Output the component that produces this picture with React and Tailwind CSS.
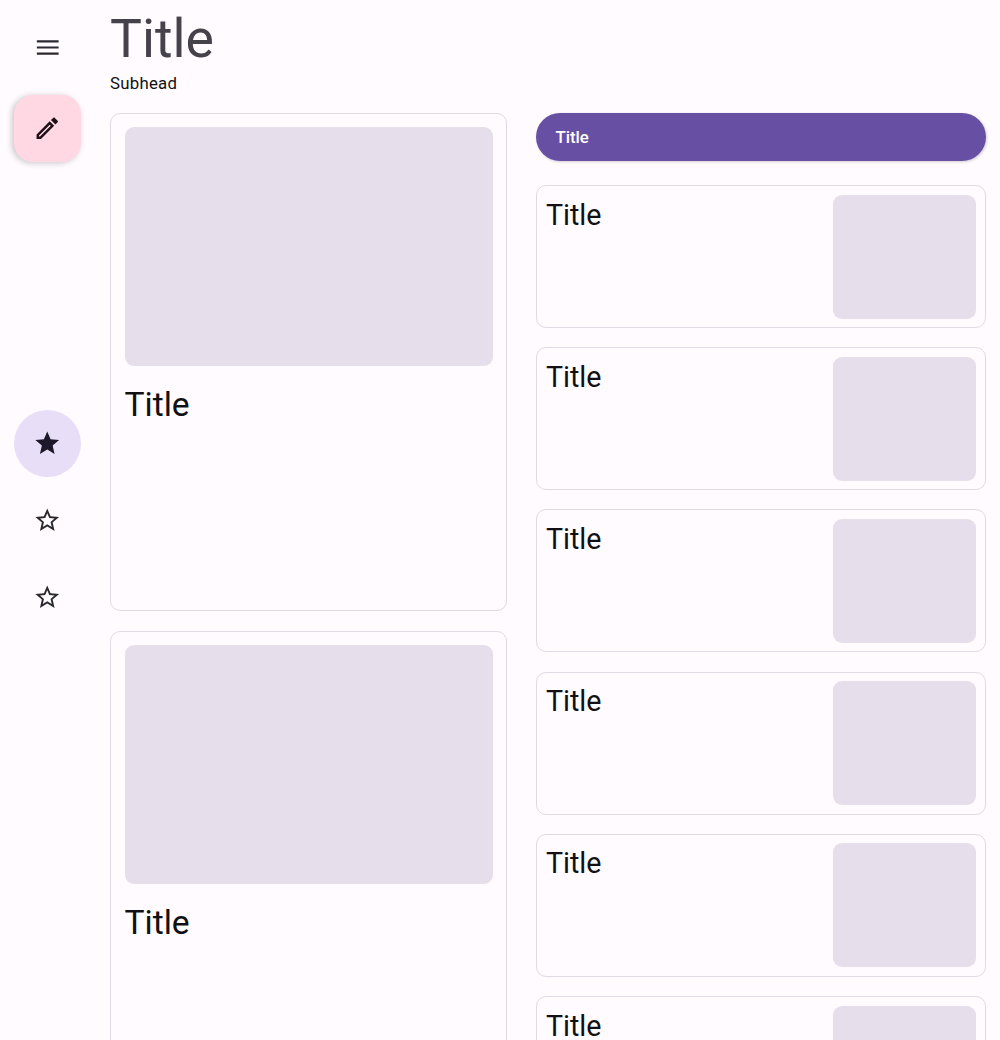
function Star({ filled }) {
  return (
    <svg viewBox="0 0 24 24" className="size-[28.5px]" fill="currentColor">
      {filled ? (
        <path d="M12 17.27 18.18 21l-1.64-7.03L22 9.24l-7.19-.61L12 2 9.19 8.63 2 9.24l5.46 4.73L5.82 21z" />
      ) : (
        <path d="m22 9.24-7.19-.62L12 2 9.19 8.63 2 9.24l5.46 4.73L5.82 21 12 17.27 18.18 21l-1.63-7.03L22 9.24zM12 15.4l-3.76 2.27 1-4.28-3.32-2.88 4.38-.38L12 6.1l1.71 4.04 4.38.38-3.32 2.88 1 4.28L12 15.4z" />
      )}
    </svg>
  );
}

function Rail() {
  return (
    <nav className="flex w-[95px] shrink-0 flex-col items-center text-[#2b2930]">
      <button className="mt-[33px] flex size-[29px] items-center justify-center">
        <svg viewBox="0 0 24 24" className="size-[29px]" fill="currentColor">
          <path d="M3.2 18h18v-1.8h-18V18zm0-5.1h18v-1.8h-18v1.8zM3.2 6v1.8h18V6h-18z" />
        </svg>
      </button>
      <button className="mt-[33px] flex size-[67px] items-center justify-center rounded-[19px] bg-[#ffd8e4] text-[#1f1017] shadow-[-2px_1px_6px_0px_rgba(0,0,0,0.22)]">
        <svg viewBox="0 0 24 24" className="mb-px size-[28.5px]" fill="currentColor">
          <path d="M14.06 9.02l.92.92L5.92 19H5v-.92l9.06-9.06M17.66 3c-.25 0-.51.1-.7.29l-1.83 1.83 3.75 3.75 1.83-1.83c.39-.39.39-1.02 0-1.41l-2.34-2.34c-.2-.2-.45-.29-.71-.29zm-3.6 3.19L3 17.25V21h3.75L17.81 9.94l-3.75-3.75z" />
        </svg>
      </button>
      <button className="mt-[248px] flex size-[66.7px] items-center justify-center rounded-full bg-[#e8def8] text-[#1d192b]">
        <Star filled />
      </button>
      <button className="mt-[10.1px] flex size-[66.7px] items-center justify-center"><Star /></button>
      <button className="mt-[10.1px] flex size-[66.7px] items-center justify-center"><Star /></button>
    </nav>
  );
}

function LargeCard() {
  return (
    <article className="h-[498px] shrink-0 rounded-[10px] border border-[#dfdae6] px-[13.5px] pt-[13px]">
      <div className="h-[239px] rounded-[9px] bg-[#e6dfeb]" />
      <h2 className="mt-[19px] text-[33.6px] leading-[40px]">Title</h2>
    </article>
  );
}

function SmallCard() {
  return (
    <article className="flex h-[143px] shrink-0 justify-between rounded-[10px] border border-[#dfdae6] px-[9px] pt-[8.6px]">
      <h3 className="mt-[3px] text-[28.6px] leading-[34px]">Title</h3>
      <div className="h-[124px] w-[143px] rounded-[9px] bg-[#e6dfeb]" />
    </article>
  );
}

export default function App() {
  return (
    <div className="flex h-[1040px] w-[1000px] overflow-hidden bg-[#fffbfe] font-[Roboto,sans-serif] text-[#111014]">
      <Rail />
      <main className="ml-[15px] flex-1 pr-[14.5px]">
        <header className="h-[113px] pt-[7px]">
          <h1 className="text-[53.6px] leading-[64px] text-[#46424c]">Title</h1>
          <p className="mt-[2px] text-[16.8px] leading-5 tracking-[0.25px]">Subhead</p>
        </header>
        <div className="flex gap-[29px]">
          <section className="flex w-[397px] shrink-0 flex-col gap-[20px]">
            <LargeCard />
            <LargeCard />
          </section>
          <section className="flex flex-1 flex-col">
            <div className="mb-[24px] flex h-[48px] items-center rounded-full bg-[#6750a4] pt-px pl-[19.5px] text-[16.8px] font-medium text-white shadow-[1px_1px_3px_rgba(0,0,0,0.18)]">Title</div>
            <div className="flex flex-col gap-[19.2px]">
              {[0, 1, 2, 3, 4, 5].map((i) => <SmallCard key={i} />)}
            </div>
          </section>
        </div>
      </main>
    </div>
  );
}
